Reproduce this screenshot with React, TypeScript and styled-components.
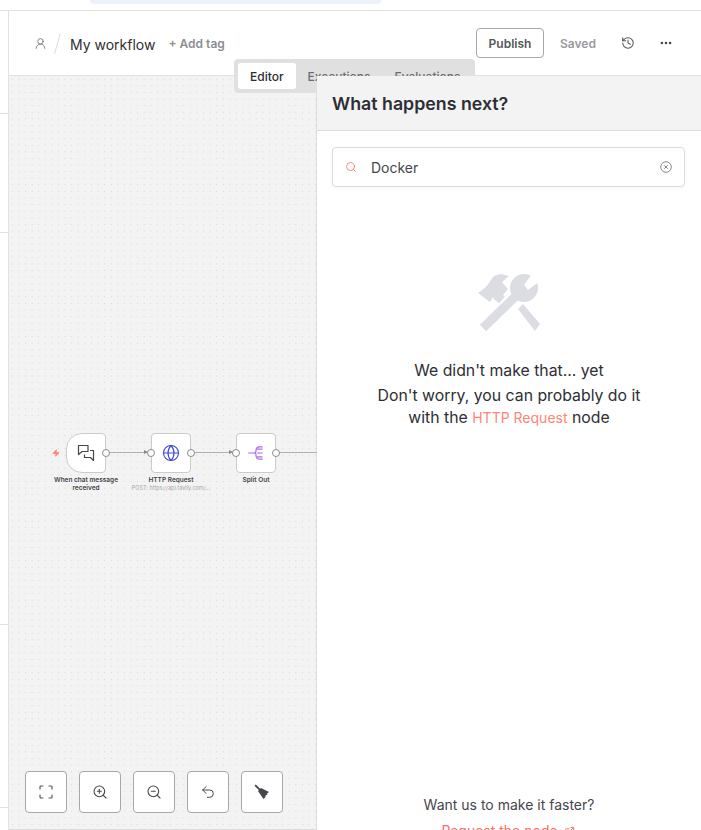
import React from "react";
import styled, { createGlobalStyle } from "styled-components";
import { UserRound, History, Ellipsis, Search, Globe, ZoomIn, ZoomOut, Undo2, Zap, ExternalLink } from "lucide-react";

const Global = createGlobalStyle`
  html, body { margin: 0; padding: 0; background: #fff; }
  body { font-family: Inter, "Liberation Sans", sans-serif; color: #2d2e33; overflow: hidden; }
  * { box-sizing: border-box; }
`;

const Page = styled.div`
  width: 701px; height: 830px; display: flex; flex-direction: column; overflow: hidden; position: relative;
`;
const TopStrip = styled.div`
  height: 11px; flex: none; border-bottom: 1px solid #e2e2e2; padding-left: 90px;
`;
const TopPill = styled.div`
  width: 291px; height: 4px; background: #edf2fa; border-radius: 0 0 12px 12px;
`;
const Body = styled.div`
  flex: 1; display: flex; min-height: 0;
`;
const Rail = styled.div`
  width: 9px; flex: none; border-right: 1px solid #e2e2e2; display: flex; flex-direction: column;
`;
const RailSection = styled.div<{ $h: number }>`
  height: ${p => p.$h}px; flex: none; border-bottom: 1px solid #e2e2e2;
`;
const Main = styled.div`
  flex: 1; min-width: 0; display: flex; flex-direction: column; position: relative;
`;
const Header = styled.header`
  height: 65px; flex: none; border-bottom: 1px solid #e2e2e2; display: flex; align-items: center;
  padding: 0 28px 0 26px;
`;
const Slash = styled.span`
  width: 1px; height: 21px; background: #d9dbe0; transform: rotate(16deg); margin: 1px 11px 0 10px;
`;
const UserIcon = styled(UserRound)`
  width: 13px; height: 13px; color: #6c6d73; margin: 1px 0 0 -1px;
`;
const WorkflowName = styled.span`
  font-size: 14px; font-weight: 400; color: #2d2e33; margin: 2px 13px 0 1px;
`;
const AddTag = styled.span`
  font-size: 12px; font-weight: 600; color: #8c8d93;
`;
const Spacer = styled.div`flex: 1;`;
const Publish = styled.button`
  width: 68px; height: 30px; background: #fff; border: 1px solid #a8a8a8; border-radius: 4px;
  font: 600 12px Inter, sans-serif; color: #55565c; padding: 0;
`;
const Saved = styled.span`
  font-size: 12px; font-weight: 600; color: #9a9a9e; margin: 0 0 0 16px; width: 36px;
`;
const HistoryIcon = styled(History)`
  width: 14px; height: 14px; color: #55565c; margin: 0 0 0 25px;
`;
const MoreIcon = styled(Ellipsis)`
  width: 14px; height: 14px; color: #45464c; margin: 0 0 0 24px;
`;
const Tabs = styled.div`
  position: absolute; left: 225px; top: 48px; width: 241px; height: 34px; background: #e0e0e0; z-index: 1;
  border-radius: 4px; padding: 4px; display: flex; align-items: flex-start;
`;
const Tab = styled.span<{ $active?: boolean }>`
  height: 26px; display: flex; align-items: center; border-radius: 3px; font-size: 12px; font-weight: 500;
  padding: 0 12px; background: ${p => (p.$active ? "#fff" : "transparent")};
  color: ${p => (p.$active ? "#2d2e33" : "#6c6d73")};
`;
const Content = styled.div`
  flex: 1; display: flex; min-height: 0;
`;
const Canvas = styled.div`
  width: 308px; flex: none; height: 754px; position: relative; border-right: 1px solid #dcdcdc; border-bottom: 1px solid #dcdcdc;
  background-color: #f3f3f3;
  background-image: radial-gradient(circle at center, #d6d6d6 0.5px, transparent 0.85px);
  background-size: 6.6px 6.6px;
`;
const NodeBox = styled.div<{ $x: number; $trigger?: boolean }>`
  position: absolute; left: ${p => p.$x}px; top: 357px; width: 40px; height: 40px; background: #fff;
  border: 1.5px solid #cbcbcb; border-radius: ${p => (p.$trigger ? "16px 4px 4px 16px" : "4px")};
  display: flex; align-items: center; justify-content: center;
`;
const Port = styled.span<{ $side: "l" | "r" }>`
  position: absolute; top: 15px; ${p => (p.$side === "l" ? "left: -5px" : "right: -5px")};
  width: 8px; height: 8px; border-radius: 50%; background: #fff; border: 1px solid #8a8a8a;
`;
const NodeLabel = styled.div<{ $x: number; $w: number }>`
  position: absolute; left: ${p => p.$x}px; top: 400px; width: ${p => p.$w}px; text-align: center;
  font-size: 6.5px; font-weight: 600; line-height: 8px; color: #43444a;
`;
const NodeSub = styled.div`
  font-size: 5.5px; font-weight: 400; color: #a8a8ac; white-space: nowrap; line-height: 8px;
`;
const Edge = styled.span<{ $x: number; $w: number }>`
  position: absolute; left: ${p => p.$x}px; top: 376px; width: ${p => p.$w}px; height: 1px; background: #b0b0b0;
`;
const EdgeArrow = styled.span<{ $x: number }>`
  position: absolute; z-index: 1; left: ${p => p.$x}px; top: 374px; width: 0; height: 0;
  border-left: 4px solid #8a8a8a; border-top: 2.5px solid transparent; border-bottom: 2.5px solid transparent;
`;
const Bolt = styled(Zap)`
  position: absolute; left: 43px; top: 372px; width: 8px; height: 10px; color: #ff8577; fill: #ff8577;
`;
const ControlRow = styled.div`
  position: absolute; left: 16px; top: 695px; display: flex; gap: 12px;
`;
const ControlBtn = styled.div`
  width: 42px; height: 42px; background: #fff; border: 1px solid #a8a8a8; border-radius: 4px;
  display: flex; align-items: center; justify-content: center; color: #45464c;
`;
const Panel = styled.aside`
  flex: 1; min-width: 0; display: flex; flex-direction: column; background: #fff; position: relative; z-index: 2;
`;
const PanelHead = styled.div`
  height: 55px; flex: none; background: #f3f3f3; border-bottom: 1px solid #dcdcdc;
  display: flex; align-items: center; padding-left: 15px;
  font-size: 17.8px; font-weight: 600; color: #2d2e33;
`;
const SearchBox = styled.div`
  height: 40px; margin: 16px 16px 0 15px; border: 1px solid #dcdcdc; border-radius: 4px; background: #fff;
  display: flex; align-items: center; padding: 0 12px; box-shadow: 0 1px 4px rgba(0,0,0,.04);
  font-size: 14px; color: #45464c;
`;
const SearchIcon = styled(Search)`
  width: 12px; height: 12px; color: #ff6d5a; margin-right: 14px;
`;
const SearchText = styled.span`flex: 1;`;
const Empty = styled.div`
  display: flex; flex-direction: column; align-items: center; margin-top: 87px; font-size: 15.8px; line-height: 22px; color: #2d2e33;
`;
const ToolsSvg = styled.svg`
  width: 62px; height: 60px; color: #dcdde3; margin-bottom: 26px;
`;
const Lead = styled.div`margin-bottom: 3px;`;
const Accent = styled.span`color: #ff8577; font-size: 14px;`;
const Footer = styled.div`
  margin-top: auto; text-align: center; font-size: 14px; line-height: 20px; color: #45464c; height: 35px; overflow: visible;
`;
const FootLink = styled.div`
  color: #ff6d5a; display: flex; align-items: center; justify-content: center; gap: 6px; margin-top: 6px; padding-right: 2px;
`;

const Tools = () => (
  <ToolsSvg viewBox="0 0 62 60">
    <path fill="currentColor" d="M0 19 L8 13 L16 2 L23 0 L31 2 L24 8 L30 15 L20 27 L15 23 L12 28 Z" />
    <path fill="currentColor" d="M40 35 L45 30 L62 50 L57 57 Z" />
    <path stroke="#fff" strokeWidth="14" d="M5 54 L40 20" />
    <path stroke="currentColor" strokeWidth="9" d="M5 54 L40 20" />
    <path stroke="currentColor" strokeWidth="9" d="M18 21 L24 26" />
    <circle cx="46" cy="14" r="14" fill="currentColor" />
    <path fill="#fff" d="M54 0 L46 11 L50 16 L62 7 L62 0 Z" />
  </ToolsSvg>
);

const ClearIcon = () => (
  <svg width="12" height="12" viewBox="0 0 12 12" fill="none" stroke="#8a8a8e" strokeWidth="1">
    <circle cx="6" cy="6" r="5.3" />
    <path d="M4.2 4.2 7.8 7.8 M7.8 4.2 4.2 7.8" />
  </svg>
);

const FitIcon = () => (
  <svg width="14" height="14" viewBox="0 0 14 14" fill="none" stroke="#55565c" strokeWidth="1.2" strokeLinecap="round">
    <path d="M1 4V2a1 1 0 0 1 1-1h2M10 1h2a1 1 0 0 1 1 1v2M13 10v2a1 1 0 0 1-1 1h-2M4 13H2a1 1 0 0 1-1-1v-2" />
  </svg>
);

const BroomIcon = () => (
  <svg width="16" height="16" viewBox="0 0 16 16">
    <path d="M0.5 1.8 1.8 0.5 6.8 5.5 5.5 6.8Z" fill="#45464c" />
    <path d="M4 7 7 4 15 8 13 9.5 13.5 10.5 11.5 11.5 11.5 13 9.5 15Z" fill="#45464c" />
  </svg>
);

const ChatIcon = () => (
  <svg width="18" height="18" viewBox="0 0 18 18" fill="none" stroke="#45464c" strokeWidth="1.2" strokeLinejoin="round">
    <path d="M1.5 1.5h9.5v6H5L1.5 10.5Z" />
    <path d="M13 6.5h3.5v10l-3-3H7.5v-3" />
  </svg>
);

const SplitIcon = () => (
  <svg width="16" height="14" viewBox="0 0 18 16" fill="none" stroke="#ab6be6" strokeWidth="1.4" strokeLinecap="round">
    <path d="M0.5 8H6.5M10.5 3.5H16M10.5 8H16M10.5 12.5H16" />
    <path d="M16 1H13C10 1 9 3 9 5.5 9 7 8 8 6.8 8 8 8 9 9 9 10.5 9 13 10 15 13 15H16" />
  </svg>
);

export default function App() {
  return (
    <Page>
      <Global />
      <TopStrip><TopPill /></TopStrip>
      <Body>
        <Rail>
          <RailSection $h={103} />
          <RailSection $h={119} />
          <RailSection $h={392} />
          <RailSection $h={183} />
        </Rail>
        <Main>
          <Header>
            <UserIcon strokeWidth={1.5} />
            <Slash />
            <WorkflowName>My workflow</WorkflowName>
            <AddTag>+ Add tag</AddTag>
            <Spacer />
            <Publish>Publish</Publish>
            <Saved>Saved</Saved>
            <HistoryIcon strokeWidth={1.8} />
            <MoreIcon strokeWidth={2.4} />
          </Header>
          <Tabs>
            <Tab $active>Editor</Tab>
            <Tab>Executions</Tab>
            <Tab>Evaluations</Tab>
          </Tabs>
          <Content>
            <Canvas>
              <Bolt />
              <Edge $x={101} $w={45} />
              <EdgeArrow $x={135} />
              <Edge $x={186} $w={46} />
              <EdgeArrow $x={220} />
              <Edge $x={271} $w={37} />
              <NodeBox $x={57} $trigger>
                <ChatIcon />
                <Port $side="r" />
              </NodeBox>
              <NodeBox $x={142}>
                <Globe size={18} strokeWidth={1.5} color="#3b46d8" />
                <Port $side="l" /><Port $side="r" />
              </NodeBox>
              <NodeBox $x={227}>
                <SplitIcon />
                <Port $side="l" /><Port $side="r" />
              </NodeBox>
              <NodeLabel $x={42} $w={70}>When chat message received</NodeLabel>
              <NodeLabel $x={112} $w={100}>HTTP Request<NodeSub>POST: https://api.tavily.com/...</NodeSub></NodeLabel>
              <NodeLabel $x={217} $w={60}>Split Out</NodeLabel>
              <ControlRow>
                <ControlBtn><FitIcon /></ControlBtn>
                <ControlBtn><ZoomIn size={16} strokeWidth={1.6} /></ControlBtn>
                <ControlBtn><ZoomOut size={16} strokeWidth={1.6} /></ControlBtn>
                <ControlBtn><Undo2 size={16} strokeWidth={1.5} /></ControlBtn>
                <ControlBtn><BroomIcon /></ControlBtn>
              </ControlRow>
            </Canvas>
            <Panel>
              <PanelHead>What happens next?</PanelHead>
              <SearchBox>
                <SearchIcon strokeWidth={1.6} />
                <SearchText>Docker</SearchText>
                <ClearIcon />
              </SearchBox>
              <Empty>
                <Tools />
                <Lead>We didn't make that... yet</Lead>
                <div>Don't worry, you can probably do it</div>
                <div>with the <Accent>HTTP Request</Accent> node</div>
              </Empty>
              <Footer>
                Want us to make it faster?
                <FootLink>Request the node <ExternalLink size={11} /></FootLink>
              </Footer>
            </Panel>
          </Content>
        </Main>
      </Body>
    </Page>
  );
}
